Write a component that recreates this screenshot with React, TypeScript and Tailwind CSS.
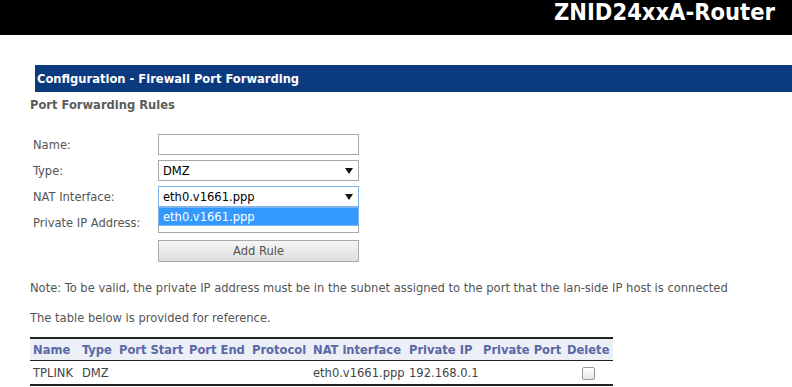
const font = { fontFamily: '"DejaVu Sans Condensed", Tahoma, "DejaVu Sans", sans-serif' };

const Caret = () => (
  <svg width="8" height="6" viewBox="0 0 8 6" className="absolute right-[6px] top-[8px]">
    <path d="M0 0h8L4 6z" fill="#111" />
  </svg>
);

const rows = [
  { label: "Name:", kind: "input" },
  { label: "Type:", kind: "select", value: "DMZ" },
  { label: "NAT Interface:", kind: "open", value: "eth0.v1661.ppp" },
  { label: "Private IP Address:", kind: "input" },
];

const headers = [
  "Name",
  "Type",
  "Port Start",
  "Port End",
  "Protocol",
  "NAT interface",
  "Private IP",
  "Private Port",
  "Delete",
];

const App = () => {
  return (
    <div className="w-[792px] h-[387px] overflow-hidden bg-white text-[12.8px]" style={font}>
      {/* top banner */}
      <div className="h-[35px] bg-black flex justify-end items-start pr-[17px]">
        <span className="text-white font-bold text-[23.5px] leading-[24px]">ZNID24xxA-Router</span>
      </div>

      <div className="pl-[30px] pt-[30px]">
        <div className="ml-[5px] h-[27px] bg-[#0b3a7e] text-white font-bold flex items-center pl-[2px]">
          Configuration - Firewall Port Forwarding
        </div>
        <div className="mt-[5px] font-bold text-[#5c5c5c] leading-[16px]">Port Forwarding Rules</div>

        {/* form */}
        <div className="mt-[21px] flex flex-col gap-[5px] pl-[3px] text-[#555]">
          {rows.map((r) => (
            <div key={r.label} className="flex items-center h-[21px]">
              <span className="w-[125px]">{r.label}</span>
              <div className="relative w-[201px] h-[21px]">
                {r.kind === "input" && <div className="w-full h-full border border-[#a9a9a9] bg-white" />}
                {r.kind === "select" && (
                  <div className="w-full h-full border border-[#a9a9a9] bg-white text-black pl-[4px] leading-[19px]">
                    {r.value}
                    <Caret />
                  </div>
                )}
                {r.kind === "open" && (
                  <>
                    <div className="w-full h-full border border-[#7eb4ea] bg-white text-black pl-[4px] leading-[19px]">
                      {r.value}
                      <Caret />
                    </div>
                    <div className="absolute left-0 top-[21px] z-10 w-full h-[19px] bg-[#3399ff] border border-[#7eb4ea] text-white pl-[4px] leading-[17px]">
                      {r.value}
                    </div>
                  </>
                )}
              </div>
            </div>
          ))}
          <div className="flex items-center h-[22px] mt-[2px]">
            <span className="w-[125px]" />
            <button className="w-[201px] h-[22px] border border-[#a9a9a9] bg-gradient-to-b from-[#f6f6f6] to-[#dedede] text-[#555]">
              Add Rule
            </button>
          </div>
        </div>

        <p className="mt-[18px] text-[#555] leading-[16px]">
          Note: To be valid, the private IP address must be in the subnet assigned to the port that the lan-side IP host is connected
        </p>
        <p className="mt-[14px] text-[#555] leading-[16px]">The table below is provided for reference.</p>

        {/* reference table */}
        <table className="mt-[11px] w-[583px] table-fixed border-collapse">
          <colgroup>
            <col className="w-[49px]" />
            <col className="w-[37px]" />
            <col className="w-[70px]" />
            <col className="w-[63px]" />
            <col className="w-[61px]" />
            <col className="w-[96px]" />
            <col className="w-[74px]" />
            <col className="w-[84px]" />
            <col className="w-[49px]" />
          </colgroup>
          <thead>
            <tr className="border-t-2 border-b border-[#222] bg-[#eceff5]">
              {headers.map((h) => (
                <th key={h} className="pl-[3px] h-[22px] font-bold text-[#5a68a8] whitespace-nowrap text-left">
                  {h}
                </th>
              ))}
            </tr>
          </thead>
          <tbody>
            <tr className="border-b-2 border-[#222] text-[#444]">
              <td className="pl-[3px] h-[25px]">TPLINK</td>
              <td className="pl-[3px]">DMZ</td>
              <td />
              <td />
              <td />
              <td className="pl-[3px]">eth0.v1661.ppp</td>
              <td className="pl-[3px]">192.168.0.1</td>
              <td />
              <td className="text-center">
                <span className="inline-block w-[13px] h-[13px] border border-[#999] rounded-[2px] bg-gradient-to-b from-white to-[#e6e6e6] align-middle" />
              </td>
            </tr>
          </tbody>
        </table>
      </div>
    </div>
  );
};

export default App;
